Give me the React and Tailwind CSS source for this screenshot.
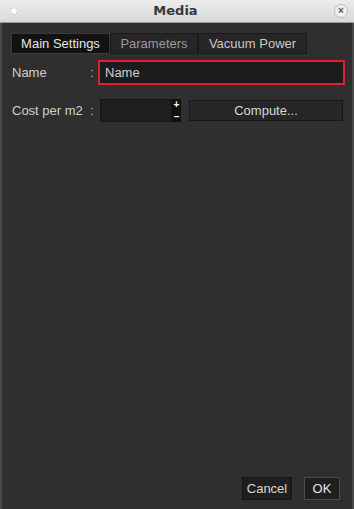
export default function App() {
  return (
    <div className="w-[354px] h-[509px] flex flex-col bg-[#2f2f2f] text-[13px] font-['Liberation_Sans',Arial,sans-serif] overflow-hidden">
      {/* Title bar */}
      <div className="h-[23px] shrink-0 flex items-center justify-between px-[11px] bg-gradient-to-b from-[#ececec] to-[#d9d9d9] border-b border-[#9a9a9a]">
        <span className="w-[6px] h-[6px] rounded-full bg-white shadow-[0_0_1px_#888]" />
        <span className="font-bold text-[13px] text-[#3a3a3a] font-['DejaVu_Sans',sans-serif]">Media</span>
        <span className="w-[14px] h-[14px] -mr-[5px] rounded-full border border-[#bbb] bg-[#f0f0f0] flex items-center justify-center text-[10px] leading-none text-[#555] font-bold">
          ×
        </span>
      </div>

      <div className="flex-1 flex flex-col border-x-2 border-[#4a4a4a] px-[9px]">
        {/* Tabs */}
        <div className="flex mt-[10px] h-[21px]">
          <div className="w-[99px] flex items-center justify-center bg-[#121212] border border-[#3a3a3a] text-[#e6e6e6]">
            Main Settings
          </div>
          <div className="w-[88px] flex items-center justify-center bg-[#262626] border border-[#1a1a1a] text-[#9a9a9a]">
            Parameters
          </div>
          <div className="w-[109px] flex items-center justify-center bg-[#262626] border border-[#1a1a1a] text-[#c8c8c8]">
            Vacuum Power
          </div>
        </div>

        {/* Name row */}
        <div className="flex items-center mt-[6px] h-[25px]">
          <span className="w-[79px] pl-[1px] text-[#cfcfcf]">Name</span>
          <span className="w-[8px] text-[#bbb]">:</span>
          <div className="flex-1 h-[25px] border-2 border-[#e0202a] bg-[#1c1c1c] flex items-center px-[5px] text-[#cfcfcf] mr-[-2px]">
            Name
          </div>
        </div>

        {/* Cost row */}
        <div className="flex items-center mt-[14px] h-[23px]">
          <span className="w-[79px] pl-[1px] text-[#cfcfcf] whitespace-nowrap">Cost per m2</span>
          <span className="w-[10px] text-[#bbb]">:</span>
          <div className="w-[72px] h-[23px] bg-[#1e1e1e] border border-[#141414]" />
          <div className="w-[9px] h-[23px] bg-[#111] flex flex-col items-center justify-between text-[10px] leading-[11px] text-white font-bold">
            <span>+</span>
            <span>–</span>
          </div>
          <div className="ml-[8px] w-[154px] h-[21px] bg-[#262626] border border-[#161616] flex items-center justify-center text-[#d8d8d8]">
            Compute...
          </div>
        </div>

        {/* Footer */}
        <div className="mt-auto mb-[9px] flex justify-end gap-[12px] pr-[3px]">
          <div className="w-[50px] h-[23px] bg-[#1f1f1f] border border-[#151515] flex items-center justify-center text-[#d8d8d8]">
            Cancel
          </div>
          <div className="w-[36px] h-[23px] bg-[#1f1f1f] border border-[#4a4a4a] flex items-center justify-center text-[#e6e6e6]">
            OK
          </div>
        </div>
      </div>
    </div>
  )
}
